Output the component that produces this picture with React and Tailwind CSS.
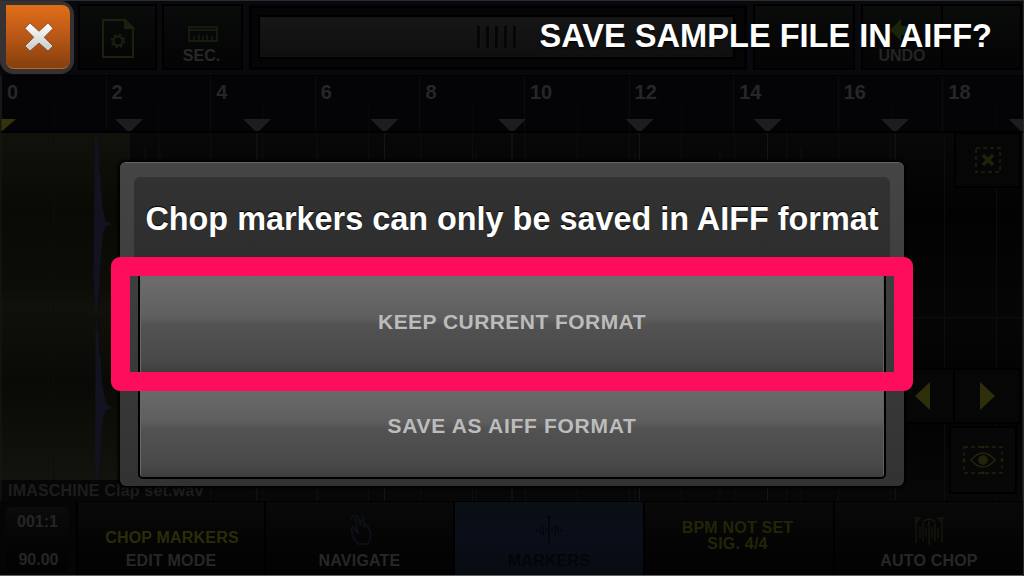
import clsx from 'clsx';

const RULER = [0, 2, 4, 6, 8, 10, 12, 14, 16, 18];
const MARKERS = [129, 257, 384.5, 512, 639.5, 767.5, 895, 1022.5];
const PEAKS = [145, 160, 318, 476, 635, 720, 801];

function ToolButton({ className, children }) {
  return (
    <div className={clsx('h-[66px] border-2 border-black bg-gradient-to-b from-[#0a0b0b] to-[#040405] flex flex-col items-center', className)}>
      {children}
    </div>
  );
}

function CloseButton() {
  return (
    <button className="flex items-start w-[74px] h-[73px] shrink-0 rounded-b-[14px] rounded-tr-[14px] bg-[#353231] pl-[6px] pt-[4px]">
      <span className="flex items-center justify-center w-[64px] h-[64px] rounded-[8px] rounded-tl-none bg-gradient-to-b from-[#e26e19] via-[#b85716] to-[#853f0d] border-b border-[#b96a30]">
        <svg width="34" height="34" viewBox="0 0 34 34">
          <defs>
            <linearGradient id="cross" x1="0" y1="0" x2="0" y2="1">
              <stop offset="0" stopColor="#ffffff" />
              <stop offset="1" stopColor="#c9c9cb" />
            </linearGradient>
          </defs>
          <path d="M9 3 18 11.3 27 3 32 8.4 23.2 17.300 32 26 27 31 18 23 9 31 4 26 12.800 17.300 4 8.4z" fill="url(#cross)" stroke="#6d3b19" strokeWidth=".7" />
        </svg>
      </span>
    </button>
  );
}

function Toolbar() {
  return (
    <div className="flex h-[75px] shrink-0 bg-[#08080d] border-t border-[#2b2c30]">
      <CloseButton />
      <ToolButton className="mt-[3px] ml-1 w-[79px] pt-[12px]">
        <svg width="34" height="42" viewBox="0 0 34 42" fill="none" stroke="#17230f" strokeWidth="2">
          <path d="M2 2h22l8 8v29H2z" />
          <path d="M24 2v8h8z" fill="#17230f" />
          <circle cx="17" cy="23" r="4.5" />
          <circle cx="17" cy="23" r="6.2" strokeDasharray="2.4 2.47" />
        </svg>
      </ToolButton>
      <ToolButton className="mt-[3px] ml-[5px] w-[81px] pt-[20px]">
        <svg width="30" height="17" viewBox="0 0 30 17" fill="none" stroke="#18240f">
          <path d="M1 1h28v14H1zM1 4h28" strokeWidth="1.6" />
          <path d="M6 15v-5M11 15v-6M15 15v-5M19 15v-6M24 15v-5" strokeWidth="1.3" />
        </svg>
        <span className="mt-[4px] pr-0.5 text-[16px] leading-[18px] text-[#28282a]">SEC.</span>
      </ToolButton>
      <div className="mt-[4px] ml-[6px] w-[498px] h-[65px] border-[3px] border-black bg-[#050506] py-[6px] pl-[6px] pr-[9px]">
        <div className="h-[44px] mt-[1px] bg-gradient-to-b from-[#171717] to-[#100e0f] border-2 border-black flex items-center justify-center gap-[5px]">
          {[0, 1, 2, 3, 4].map(i => (
            <span key={i} className="w-1 h-[22px] bg-[#060606] border-r border-[#151516]" />
          ))}
        </div>
      </div>
      <ToolButton className="mt-[3px] ml-[6px] w-[102px]" />
      <ToolButton className="mt-[3px] ml-[6px] w-[82px] pt-[12px]">
        <svg width="30" height="24" viewBox="0 0 30 24">
          <path d="M3 12 14 1v7h14v9H14v6z" fill="#1a240a" />
        </svg>
        <span className="mt-[4px] text-[16px] leading-[20px] text-[#242426]">UNDO</span>
      </ToolButton>
      <ToolButton className="mt-[3px] -ml-0.5 w-[81px]" />
    </div>
  );
}

function Ruler() {
  return (
    <div className="flex h-[57px] shrink-0 overflow-hidden bg-gradient-to-b from-[#040406] to-[#040408] border-y border-y-black border-l-2 border-l-[#161618]">
      {RULER.map(n => (
        <div key={n} className="flex w-[104.6px] shrink-0 border-r border-[#0c0c10]">
          <div className="w-1/2 pl-[5px] pt-[5px] text-[20px] leading-[22px] text-[#262629]">{n}</div>
          <div className="mt-7 w-1/2 border-l border-[#07070b]" />
        </div>
      ))}
    </div>
  );
}

function Waveform() {
  return (
    <svg className="block shrink-0" width="1024" height="369" viewBox="0 0 1024 369" overflow="visible">
      <defs>
        <linearGradient id="slice" x1="0" y1="0" x2="0" y2="1">
          <stop offset="0" stopColor="#11120c" />
          <stop offset=".22" stopColor="#090a04" />
          <stop offset=".45" stopColor="#0c0d07" />
          <stop offset=".5" stopColor="#10110b" />
          <stop offset=".72" stopColor="#090a05" />
          <stop offset="1" stopColor="#12130c" />
        </linearGradient>
        <linearGradient id="rest" x1="0" y1="0" x2="0" y2="1">
          <stop offset="0" stopColor="#080808" />
          <stop offset=".22" stopColor="#020202" />
          <stop offset=".5" stopColor="#060606" />
          <stop offset=".72" stopColor="#020202" />
          <stop offset="1" stopColor="#070707" />
        </linearGradient>
      </defs>
      <rect width="1024" height="369" fill="url(#rest)" />
      <rect width="129" height="348" fill="url(#slice)" />
      {[53, 158, 210, 262, 316, 368, 420, 472, 525, 577, 629, 681, 734, 786, 838, 890, 944, 996].map(x => (
        <path key={x} d={`M${x}.5 0v369`} stroke="#0c0d0d" strokeWidth="1" />
      ))}
      <path d="M0 185.500H1024" stroke="#0d0e0c" />
      {PEAKS.map(x => (
        <path key={x} d={`M${x} 16v353`} stroke="#0b0b15" strokeWidth="1.5" />
      ))}
      {/* stereo transient, one lobe per channel */}
      <path d="M95 2h2.500v14l1.500 4v20l1.500 3v14l1.500 8 .5 10 2 8 1 6 7 3-6 2-3 5-1.500 12-1 14-1 16-1 18-1.500 14-1 12h-1l-1-20-1-22z" fill="#131220" />
      <path d="M95.500 190h1.500v10l2 2v20l2 5v12l1 10 1 8 1.500 8 2 7 5.500 4-6 2.500-2.500 5-1.500 12-1 16-1 18-3 18h-2z" fill="#131220" />
      {MARKERS.map(x => (
        <g key={x}>
          <path d={`M${x} 0v369`} stroke="#151616" />
          <path d={`M${x - 14} -13h28L${x} 1z`} fill="#1d1d1f" />
        </g>
      ))}
      <path d="M1 -13h15L1 0z" fill="#34330c" />
      <path d="M0 0H1024" stroke="#000" strokeWidth="2" />
      <path d="M1 -57V369" stroke="#191919" strokeWidth="1" />
      <rect x="2" y="348" width="208" height="21" fill="#060607" />
    </svg>
  );
}

function SideButtons() {
  return (
    <div className="absolute left-[889px] top-[132px] w-[132px] h-[369px]">
      <div className="ml-[65px] w-[67px] h-[56px] border-2 border-black bg-[#060607] flex items-center justify-center">
        <svg width="28" height="28" viewBox="0 0 28 28" fill="none" stroke="#22220a">
          <rect x="2" y="2" width="24" height="24" strokeWidth="1.5" strokeDasharray="4 3" />
          <path d="M9 9l10 10M19 9 9 19" strokeWidth="3.5" />
        </svg>
      </div>
      <div className="mt-[180px] flex">
        <div className="w-[67px] h-[56px] bg-[#060606] border-2 border-black flex items-center justify-center">
          <svg width="15" height="28" viewBox="0 0 15 28"><path d="M15 0v28L0 14z" fill="#2e2f0a" /></svg>
        </div>
        <div className="-ml-0.5 w-[69px] h-[56px] bg-[#060606] border-2 border-black flex items-center justify-center">
          <svg width="15" height="28" viewBox="0 0 15 28"><path d="M0 0v28l15-14z" fill="#2e2f0a" /></svg>
        </div>
      </div>
      <div className="mt-[2px] ml-[60px] w-[68px] h-[68px] border-2 border-black bg-[#070708] flex items-center justify-center">
        <svg width="40" height="30" viewBox="0 0 40 30" fill="none" stroke="#23230b" strokeWidth="1.3">
          <rect x="1" y="2" width="38" height="26" strokeDasharray="4 3" />
          <path d="M8 15q12-14 24 0-12 14-24 0z" strokeWidth="1.6" />
          <circle cx="20" cy="15" r="4.200" fill="#23230b" />
          <path d="M18 1h4l-2 3zM18 29h4l-2-3zM0 13v4l3-2zM40 13v4l-3-2z" fill="#23230b" stroke="none" />
        </svg>
      </div>
    </div>
  );
}

function Tab({ className, label, children }) {
  return (
    <div className={clsx('flex flex-col items-center h-[74px] border-l-2 border-t border-black text-[16px] tracking-[0.2px]', className || 'bg-gradient-to-b from-[#090909] to-[#020202] text-[#272729]')}>
      <div className="h-[49px] flex flex-col items-center">{children}</div>
      {label && <div className="leading-[20px]">{label}</div>}
    </div>
  );
}

function BottomBar() {
  return (
    <div className="h-[75px] shrink-0 grid grid-cols-[76px_188px_189px_190px_190px_190px] bg-[#050507] border-b border-[#626262]">
      <div className="mt-1.5 ml-[6px] mr-[7px] h-[65px] rounded-md bg-gradient-to-b from-[#0b0b0c] to-[#020202] text-[16px] text-[#252527] flex flex-col items-center justify-between pt-[5px] pb-0.5">
        <span className="leading-5">001:1</span>
        <span className="leading-5 pl-0.5">90.00</span>
      </div>
      <Tab label="EDIT MODE">
        <span className="mt-[26px] leading-[20px] text-[#2c2c08] pl-[2px]">CHOP MARKERS</span>
      </Tab>
      <Tab label="NAVIGATE">
        <svg className="mt-[12px]" width="24" height="32" viewBox="0 0 24 32" fill="none" stroke="#0e121c" strokeWidth="1.5">
          <path d="M10 20 7 3q1-2 3-.5L12.500 12V7q2-2 3 0l1 7 .5-3q2-1 3 1l.5 4q2 0 2 2v6q-1 3-3 6h-9q-5-5-6-9l-1-7q2-2 3 1l2 3M3 5q1-3 3-4M13 1q3 2 3 4" />
        </svg>
      </Tab>
      <Tab label="MARKERS" className="bg-gradient-to-b from-[#0a0f15] via-[#090e19] to-[#070c12] text-[#040507]">
        <svg className="mt-[13px]" width="28" height="30" viewBox="0 0 28 30" stroke="#05080c" strokeWidth="1.500">
          <path d="M2 14v3M5 11v8M8 9v12M11 12v6M17 12v6M20 9v12M23 11v8M26 14v3" />
          <path d="M14 1v28" stroke="#030406" />
          <circle cx="14" cy="2" r="1.500" fill="#030406" />
        </svg>
      </Tab>
      <Tab>
        <span className="mt-[18px] -ml-[3px] text-center leading-[16px] text-[#242407]">BPM NOT SET<br />SIG. 4/4</span>
      </Tab>
      <Tab label="AUTO CHOP">
        <svg className="mt-[14px]" width="30" height="29" viewBox="0 0 30 29" fill="none" stroke="#18180b" strokeWidth="1.300">
          <path d="M2 27V2M28 27V2M0 2h6l-4 4M30 2h-6l4 4M6 11v11M9 7v18M12 12v9M15 5v24M18 11v11M21 7v18M24 12v10M9 6q6-6 12 0" />
        </svg>
      </Tab>
    </div>
  );
}

function DialogButton({ className, children }) {
  return (
    <button className={clsx('h-[106px] border-2 border-black text-[21px] text-[#bcbcbc] bg-[linear-gradient(180deg,#6f6f6f_0%,#5e5e5e_46%,#525252_53%,#494949_88%,#3d3d3d_100%)] shadow-[inset_1px_0_0_#686868,inset_-1px_0_0_#606060]', className)}>
      {children}
    </button>
  );
}

function Dialog() {
  return (
    <div className="absolute left-[120px] top-[162px] w-[784px] h-[324px] rounded-[6px] bg-gradient-to-b from-[#454545] to-[#323232] border-t border-[#666] shadow-[0_0_3px_2px_#000] px-[14px] pt-[14px]">
      <div className="h-[300px] rounded-t-[6px] bg-[linear-gradient(180deg,#323232,#2d2d2d_95px,transparent_95px)] px-1">
        <h2 className="h-[92px] pt-[22px] text-center text-[32.4px] leading-[40px] whitespace-nowrap text-white [text-shadow:0_-1px_1px_#000]">
          Chop markers can only be saved in AIFF format
        </h2>
        <div className="flex flex-col">
          <DialogButton className="rounded-t-[5px] tracking-[0.45px]">KEEP CURRENT FORMAT</DialogButton>
          <DialogButton className="-mt-0.5 rounded-b-[5px] tracking-[0.7px]">SAVE AS AIFF FORMAT</DialogButton>
        </div>
      </div>
    </div>
  );
}

export default function App() {
  return (
    <div className="relative flex flex-col w-[1024px] h-[576px] overflow-hidden bg-black font-['Liberation_Sans',Arial,sans-serif] font-bold">
      <Toolbar />
      <Ruler />
      <Waveform />
      <BottomBar />
      <SideButtons />
      <div className="absolute left-[8px] top-[481px] text-[16px] leading-[20px] tracking-[0.2px] text-[#1d1d1e]">IMASCHINE Clap set.wav</div>
      <h1 className="absolute right-[32px] top-[16px] text-[32.6px] leading-[40px] whitespace-nowrap text-white [text-shadow:0_1px_2px_#000]">SAVE SAMPLE FILE IN AIFF?</h1>
      <Dialog />
      <div className="absolute left-[111px] top-[257px] w-[802px] h-[134px] rounded-[9px] border-[19px] border-[#ff0d5d]" />
      <div className="absolute right-0 top-0 w-[1.5px] h-[576px] bg-[#29292a]" />
    </div>
  );
}
